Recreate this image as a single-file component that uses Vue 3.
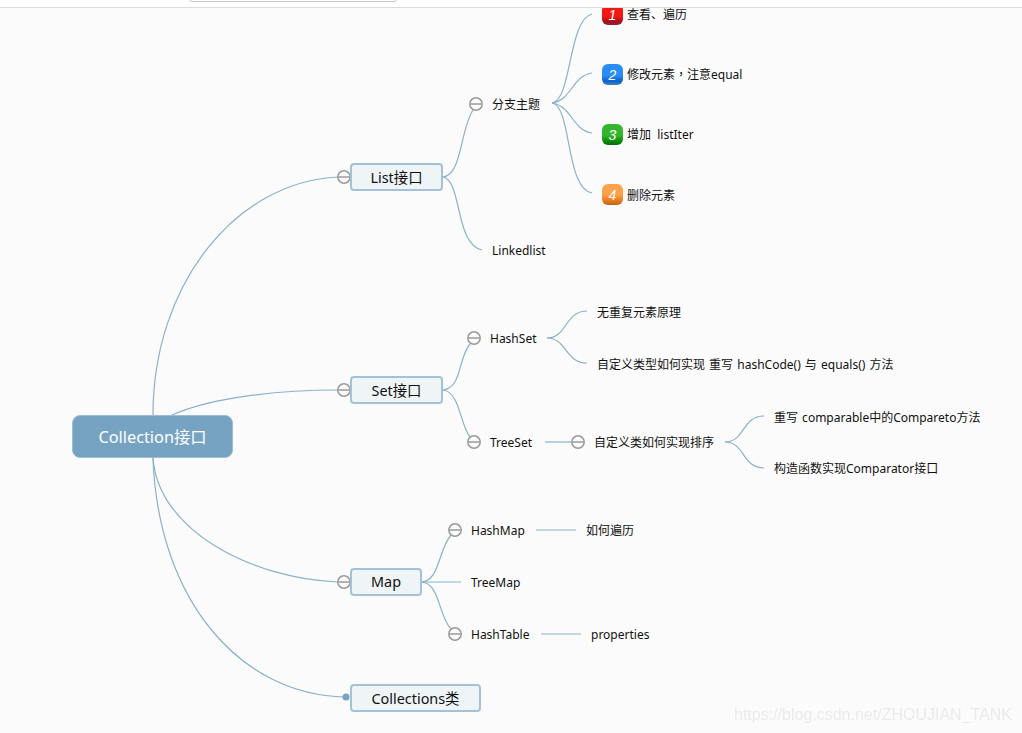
<script setup>
const edges = [
  'M153 415C153 285 235 182 338 177',
  'M172 415C215 396 285 390 338 390',
  'M153 458C158 530 250 578 338 582',
  'M153 458C158 600 240 695 345 697',
  'M443 177C462 175 460 130 473 110',
  'M443 177C462 180 455 245 482 250',
  'M552 103C572 100 568 20 592 14',
  'M552 103C572 100 572 76 592 73',
  'M552 103C572 106 572 130 592 133',
  'M552 103C572 106 565 188 592 193',
  'M443 390C462 388 458 358 470 344',
  'M443 390C460 392 460 425 470 437',
  'M547 338C567 338 565 311 587 311',
  'M547 338C567 338 565 363 587 363',
  'M545 442H571',
  'M725 442C745 442 742 416 764 416',
  'M725 442C745 442 742 468 764 468',
  'M422 582C440 580 438 550 451 535',
  'M422 582H461',
  'M422 582C440 584 438 615 451 629',
  'M536 530H576',
  'M541 634H581',
]
const toggles = [
  [344, 177], [344, 390], [344, 582],
  [476, 104], [474, 338], [474, 442], [578, 442],
  [455, 530], [455, 634],
]
const boxes = [
  { text: 'List接口', x: 350, y: 163, w: 93, h: 28 },
  { text: 'Set接口', x: 350, y: 376, w: 93, h: 28 },
  { text: 'Map', x: 350, y: 568, w: 72, h: 28 },
  { text: 'Collections类', x: 350, y: 684, w: 131, h: 28 },
]
const labels = [
  { text: '分支主题', x: 492, y: 105 },
  { text: 'Linkedlist', x: 492, y: 251 },
  { text: '查看、遍历', x: 627, y: 15 },
  { text: '修改元素，注意equal', x: 627, y: 75, tc: true },
  { text: '增加  listIter', x: 627, y: 135 },
  { text: '删除元素', x: 627, y: 196 },
  { text: 'HashSet', x: 490, y: 339 },
  { text: 'TreeSet', x: 490, y: 443 },
  { text: '无重复元素原理', x: 597, y: 313 },
  { text: '自定义类型如何实现 重写 hashCode() 与 equals() 方法', x: 597, y: 365, wide: true },
  { text: '自定义类如何实现排序', x: 594, y: 443 },
  { text: '重写 comparable中的Compareto方法', x: 774, y: 418, wide: true },
  { text: '构造函数实现Comparator接口', x: 774, y: 469 },
  { text: 'HashMap', x: 471, y: 531 },
  { text: 'TreeMap', x: 471, y: 583 },
  { text: 'HashTable', x: 471, y: 635 },
  { text: '如何遍历', x: 586, y: 531 },
  { text: 'properties', x: 591, y: 635 },
]
const badges = [
  { n: 1, y: 14, tone: 'red' },
  { n: 2, y: 74, tone: 'blue' },
  { n: 3, y: 134, tone: 'green' },
  { n: 4, y: 194, tone: 'orange' },
]
</script>

<template>
  <div class="page">
    <header class="topbar"><div class="search"></div></header>

    <svg class="links" width="1022" height="733" viewBox="0 0 1022 733">
      <path v-for="(d, i) in edges" :key="i" :d="d" class="edge" />
      <circle cx="346" cy="697" r="3.5" class="dot" />
      <g v-for="(t, i) in toggles" :key="'t' + i">
        <circle :cx="t[0]" :cy="t[1]" r="6.2" class="toggle" />
        <path :d="`M${t[0] - 6} ${t[1]}h12`" class="toggle" />
      </g>
    </svg>

    <div class="root">Collection接口</div>

    <div
      v-for="b in boxes"
      :key="b.text"
      class="box"
      :style="{ left: b.x + 'px', top: b.y + 'px', width: b.w + 'px', height: b.h + 'px' }"
    >{{ b.text }}</div>

    <div
      v-for="l in labels"
      :key="l.text"
      class="label"
      :class="{ tc: l.tc, wide: l.wide }"
      :style="{ left: l.x + 'px', top: l.y + 'px' }"
    >{{ l.text }}</div>

    <div
      v-for="b in badges"
      :key="b.n"
      class="badge"
      :class="b.tone"
      :style="{ top: b.y - 10 + 'px' }"
    >{{ b.n }}</div>

    <div class="watermark">https://blog.csdn.net/ZHOUJIAN_TANK</div>
  </div>
</template>

<style scoped>
.page {
  position: relative;
  width: 1022px;
  height: 733px;
  overflow: hidden;
  background: #fbfbfb;
  font-family: "Noto Sans", "Noto Sans CJK SC", sans-serif;
  color: #111;
}
.topbar {
  position: relative;
  z-index: 3;
  height: 7px;
  background: #fff;
  border-bottom: 1px solid #dcdcdc;
}
.search {
  position: absolute;
  left: 189px;
  top: -6px;
  width: 206px;
  height: 6px;
  background: #fff;
  border: 1px solid #c8c8c8;
  border-radius: 3px;
}
.links {
  position: absolute;
  left: 0;
  top: 0;
}
.edge {
  fill: none;
  stroke: #8ab1cc;
  stroke-width: 1.2;
}
.dot {
  fill: #77a3c3;
}
.toggle {
  fill: none;
  stroke: #9a9a9a;
  stroke-width: 1.5;
}
.root {
  position: absolute;
  left: 72px;
  top: 415px;
  width: 161px;
  height: 43px;
  padding-bottom: 2px;
  display: flex;
  align-items: center;
  justify-content: center;
  box-sizing: border-box;
  background: #77a3c3;
  border: 1px solid #9dbdd4;
  border-radius: 8px;
  color: #fff;
  font-size: 16.3px;
}
.box {
  position: absolute;
  padding-bottom: 2px;
  display: flex;
  align-items: center;
  justify-content: center;
  box-sizing: border-box;
  background: #eff4f7;
  border: 2px solid #a4c2d7;
  border-radius: 4px;
  font-size: 14.4px;
}
.label {
  position: absolute;
  transform: translateY(-50%);
  font-size: 12px;
  line-height: 16px;
  white-space: pre;
}
.tc {
  font-family: "Noto Sans", "Noto Sans CJK TC", sans-serif;
}
.wide {
  word-spacing: 1px;
}
.badge {
  position: absolute;
  left: 602px;
  width: 21px;
  height: 21px;
  z-index: 1;
  display: flex;
  align-items: center;
  justify-content: center;
  border-radius: 6px;
  color: #fff;
  font-family: "Liberation Sans", sans-serif;
  font-size: 14px;
  font-style: italic;
}
.red { background: linear-gradient(#f01a12 0 60%, #a5101e 82%, #8d2236); }
.blue { background: linear-gradient(#2a8cf5 0 55%, #0b5fcf 82%, #3c86b8); }
.green { background: linear-gradient(#34b52e 0 55%, #0a8c0a 82%, #0f6a10); }
.orange { background: linear-gradient(#fba24a 0 50%, #e8761a 82%, #b9651f); }
.watermark {
  position: absolute;
  left: 734px;
  top: 706px;
  font-family: "Liberation Sans", sans-serif;
  font-size: 16px;
  line-height: 18px;
  color: rgba(0, 0, 0, 0.07);
  white-space: nowrap;
  filter: blur(0.4px);
}
</style>
